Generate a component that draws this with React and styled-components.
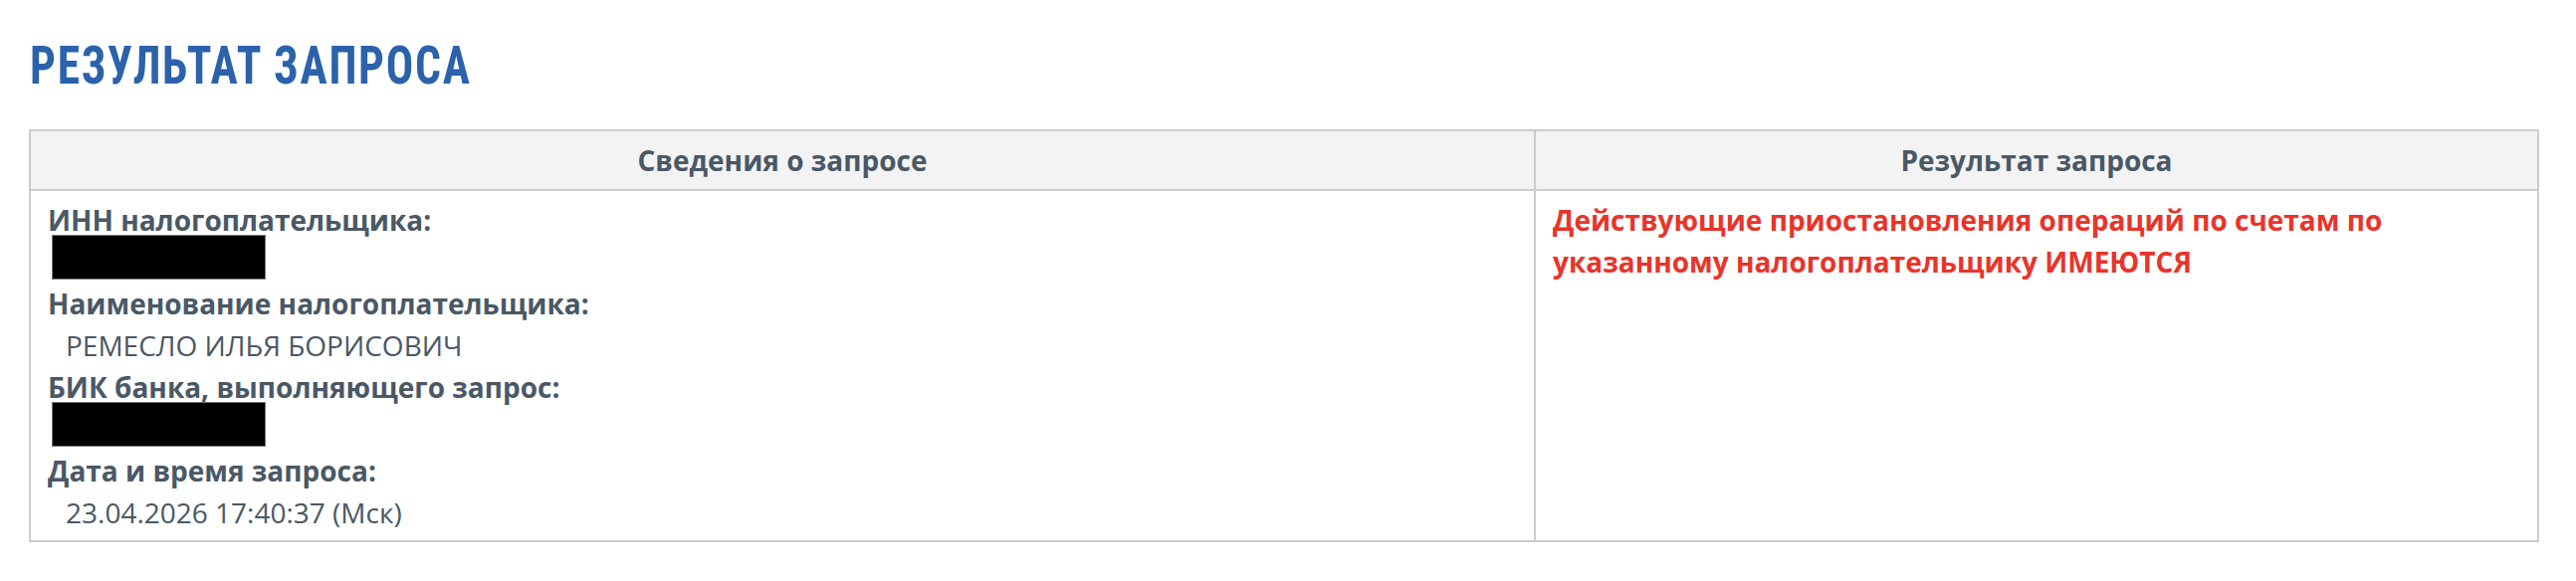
import React from 'react';
import styled, { createGlobalStyle } from 'styled-components';

// Global
const GlobalStyle = createGlobalStyle`
  body {
    margin: 0;
    background: #fff;
    font-family: "Open Sans", "Noto Sans", "Liberation Sans", sans-serif;
    color: #4a5866;
  }
`;

// data
const info = [
  { label: 'ИНН налогоплательщика:', hidden: true },
  { label: 'Наименование налогоплательщика:', value: 'РЕМЕСЛО ИЛЬЯ БОРИСОВИЧ' },
  { label: 'БИК банка, выполняющего запрос:', hidden: true },
  { label: 'Дата и время запроса:', value: '23.04.2026 17:40:37 (Мск)' },
];

function App() {
  return (
    <Page>
      <GlobalStyle />
      <TitleBox>
        <Title>Результат запроса</Title>
      </TitleBox>
      <ResultTable>
        <colgroup>
          <Col $width="60%" />
          <Col $width="40%" />
        </colgroup>
        <thead>
          <tr>
            <HeadCell>Сведения о запросе</HeadCell>
            <HeadCell>Результат запроса</HeadCell>
          </tr>
        </thead>
        <tbody>
          <tr>
            <Cell>
              {info.map((item) => (
                <React.Fragment key={item.label}>
                  <Label>{item.label}</Label>
                  {item.hidden ? (
                    <Redacted />
                  ) : (
                    <Value>{item.value}</Value>
                  )}
                </React.Fragment>
              ))}
            </Cell>
            <Cell>
              <Status>
                Действующие приостановления операций по счетам по указанному
                налогоплательщику ИМЕЮТСЯ
              </Status>
            </Cell>
          </tr>
        </tbody>
      </ResultTable>
    </Page>
  );
}

export default App;

const Page = styled.div`
  padding: 0 37px 39px 29px;
`;

const TitleBox = styled.div`
  height: 130px;
  padding-top: 40px;
  box-sizing: border-box;
`;

const Title = styled.h1`
  margin: 0 0 0 1px;
  font-family: "Roboto", "Liberation Sans", sans-serif;
  font-size: 53px;
  line-height: 1;
  font-weight: 700;
  font-stretch: condensed;
  letter-spacing: 2px;
  text-transform: uppercase;
  color: #2b62ab;
  transform: scaleX(0.86);
  transform-origin: left center;
  white-space: nowrap;
`;

const ResultTable = styled.table`
  width: 100%;
  border-collapse: collapse;
  border: 2px solid #cccccc;
  table-layout: fixed;
  font-size: 28px;
  line-height: 42px;
`;

const Col = styled.col`
  width: ${(p) => p.$width};
`;

const HeadCell = styled.th`
  background: #f3f3f3;
  border: 2px solid #cccccc;
  padding: 8px 17px;
  font-weight: 700;
  text-align: center;
  color: #4a5866;
`;

const Cell = styled.td`
  border: 2px solid #cccccc;
  padding: 8px 17px 7px;
  vertical-align: top;
`;

const Label = styled.div`
  font-weight: 700;
`;

const Value = styled.div`
  padding-left: 18px;
  font-weight: 400;
`;

const Redacted = styled.div`
  width: 213px;
  height: 43px;
  margin: -5px 0 4px 5px;
  background: #000;
  box-shadow: 0 0 0 1px #777;
`;

const Status = styled.div`
  font-weight: 700;
  color: #e8342a;
`;
